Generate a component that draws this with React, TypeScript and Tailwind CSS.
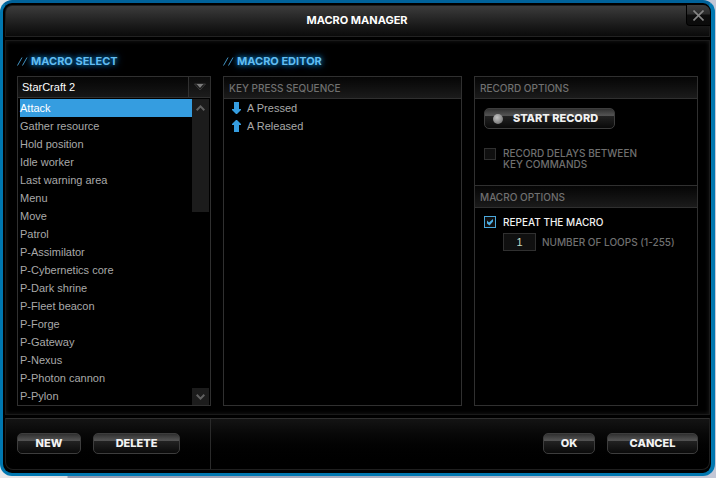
import { useState, type ReactNode } from "react";

const macros = [
  "Attack",
  "Gather resource",
  "Hold position",
  "Idle worker",
  "Last warning area",
  "Menu",
  "Move",
  "Patrol",
  "P-Assimilator",
  "P-Cybernetics core",
  "P-Dark shrine",
  "P-Fleet beacon",
  "P-Forge",
  "P-Gateway",
  "P-Nexus",
  "P-Photon cannon",
  "P-Pylon",
];

const steps = [
  { direction: "down", label: "A Pressed" },
  { direction: "up", label: "A Released" },
];

function Heading({ children }: { children: ReactNode }) {
  return (
    <h2 className="flex h-[18px] items-center gap-[3px] text-[11px] leading-[18px] font-bold text-[#62bdf2] [text-shadow:0_0_5px_#0a7cc4,0_0_9px_#0866a5]">
      <svg className="h-[9px] w-[11px]" viewBox="0 0 11 9" aria-hidden="true">
        <path d="M0.5 8.5 5 0.5M5.5 8.5 10 0.5" stroke="#4293c2" fill="none" />
      </svg>
      {children}
    </h2>
  );
}

function SectionTitle({ children }: { children: ReactNode }) {
  return (
    <h3 className="h-[22px] border-b border-[#303030] bg-linear-to-b from-[#060606] to-[#1b1b1b] px-[5px] text-[10px] leading-[22px] font-medium text-[#707070]">
      {children}
    </h3>
  );
}

function PushButton({ children, className }: { children: ReactNode; className: string }) {
  return (
    <button
      type="button"
      className={
        "flex h-[21px] items-center justify-center rounded-[5px] border border-[#3d3d3d] bg-[linear-gradient(#303030_0%,#545454_34%,#222222_38%,#0a0a0a_100%)] text-[11px] leading-none font-extrabold text-[#f2f2f2] " +
        className
      }
    >
      {children}
    </button>
  );
}

function TickBox({ id, checked, onChange }: { id: string; checked: boolean; onChange: (value: boolean) => void }) {
  return (
    <span className="grid size-[12px] shrink-0">
      <input
        id={id}
        type="checkbox"
        checked={checked}
        onChange={(event) => onChange(event.target.checked)}
        className="peer size-[12px] appearance-none border border-[#303030] bg-[#101010] [grid-area:1/1] checked:border-[#4aa8dc]"
      />
      <svg
        className="pointer-events-none invisible size-[12px] [grid-area:1/1] peer-checked:visible"
        viewBox="0 0 12 12"
        aria-hidden="true"
      >
        <path d="M3 4.5 5 6.5 9 3V5.5L5.5 9.5 3 7.5Z" fill="#4fb2e8" />
      </svg>
    </span>
  );
}

export default function App() {
  const [selected, setSelected] = useState("Attack");
  const [delays, setDelays] = useState(false);
  const [repeat, setRepeat] = useState(true);
  const [loops, setLoops] = useState("1");

  return (
    <div className="bg-[linear-gradient(90deg,#e8e8ea_0,#dcdce0_67px,#8f96ab_68px,#c3c7d6_100%)] pr-px pb-[2px] font-['Inter','Liberation_Sans',sans-serif]">
      <main className="rounded-[12px] border-[3px] border-r-4 border-[#0077b0] border-t-[#00629a] bg-black pt-[2px] pr-px pb-[3px] pl-[2px]">
        <header className="flex h-8 rounded-t-[7px] border border-t-[#1c1c1c] border-r-[#1c1c1c] border-b-[#222] border-l-[#1c1c1c] bg-linear-to-b from-[#3c3c3c] to-[#0a0a0a]">
          <span className="w-[22px] shrink-0" />
          <h1 className="flex-1 text-center text-[11px] leading-[28px] font-bold text-white">MACRO MANAGER</h1>
          <button
            type="button"
            aria-label="Close"
            className="-mt-px -mr-px flex h-[21px] w-[24px] shrink-0 items-center justify-center rounded-tr-[7px] rounded-bl-[4px] border-b border-l border-black bg-[linear-gradient(#3c3c3c_0%,#2c2c2c_45%,#0e0e0e_50%,#0b0b0b_100%)]"
          >
            <svg className="size-[11px]" viewBox="0 0 11 11" aria-hidden="true">
              <path d="M0.5 0.5 10.5 10.5M10.5 0.5 0.5 10.5" stroke="#858585" strokeWidth="1.6" />
            </svg>
          </button>
        </header>

        <div className="mt-[3px] grid grid-cols-[194fr_239fr_224fr] gap-x-3 border border-[#1a1a1a] px-[11px] pt-[11px] pb-2 shadow-[inset_0_0_4px_#1a1a1a]">
          <section className="flex flex-col gap-[6px]">
            <Heading>MACRO SELECT</Heading>
            <div className="h-[330px] border border-[#303030] font-['Liberation_Sans',Arial,sans-serif] text-[11px]">
              <div className="grid h-[21px] border-b border-[#303030] bg-linear-to-b from-[#060606] to-[#161616]">
                <select
                  aria-label="Game profile"
                  className="h-5 w-full appearance-none bg-transparent pl-1 text-white [grid-area:1/1]"
                >
                  <option>StarCraft 2</option>
                </select>
                <span className="pointer-events-none flex h-5 w-[22px] items-center justify-center justify-self-end border-l border-[#303030] bg-linear-to-b from-[#0c0c0c] to-[#1c1c1c] [grid-area:1/1]">
                  <svg className="h-[8px] w-[12px]" viewBox="0 0 12 8" aria-hidden="true">
                    <path d="M0.5 1H11.5L6 7Z" fill="#161616" stroke="#3c3c3c" />
                    <path d="M2.5 1H9.5L6 5Z" fill="#7c7c7c" />
                  </svg>
                </span>
              </div>
              <div className="flex p-px pl-[2px]">
                <ul role="listbox" aria-label="Macros" className="flex-1">
                  {macros.map((name) => (
                    <li
                      key={name}
                      role="option"
                      aria-selected={name === selected}
                      onClick={() => setSelected(name)}
                      className="h-[18px] leading-[18px] text-[#a9a9a9] aria-selected:bg-[#359de0] aria-selected:text-white"
                    >
                      {name}
                    </li>
                  ))}
                </ul>
                <div className="flex w-[17px] flex-col justify-between">
                  <div className="h-[113px] bg-[#1c1c1c]">
                    <button type="button" aria-label="Scroll up" className="flex h-[17px] w-full items-center justify-center">
                      <svg className="h-[6px] w-[9px]" viewBox="0 0 9 6" aria-hidden="true">
                        <path d="M0.7 5.2 4.5 1.4 8.3 5.2" fill="none" stroke="#606060" strokeWidth="2" />
                      </svg>
                    </button>
                  </div>
                  <button type="button" aria-label="Scroll down" className="flex h-[17px] w-full items-center justify-center bg-[#1c1c1c]">
                    <svg className="h-[6px] w-[9px]" viewBox="0 0 9 6" aria-hidden="true">
                      <path d="M0.7 0.8 4.5 4.6 8.3 0.8" fill="none" stroke="#606060" strokeWidth="2" />
                    </svg>
                  </button>
                </div>
              </div>
            </div>
          </section>

          <section className="flex flex-col gap-[6px]">
            <Heading>MACRO EDITOR</Heading>
            <div className="h-[330px] border border-[#303030]">
              <SectionTitle>KEY PRESS SEQUENCE</SectionTitle>
              <ol className="font-['Liberation_Sans',Arial,sans-serif] text-[11px]">
                {steps.map((step) => (
                  <li key={step.label} className="flex h-[18px] items-center gap-[6px] pl-2 leading-[18px] text-[#a9a9a9]">
                    <svg
                      className={"h-[12px] w-[9px] " + (step.direction === "up" ? "rotate-180" : "")}
                      viewBox="0 0 9 12"
                      aria-hidden="true"
                    >
                      <path d="M2 0H7V7H9V8L5 12H4L0 8V7H2Z" fill="#359de0" />
                    </svg>
                    {step.label}
                  </li>
                ))}
              </ol>
            </div>
          </section>

          <section className="flex flex-col pt-6">
            <div className="h-[330px] border border-[#303030] text-[10px] leading-[11px] font-medium text-[#707070]">
              <SectionTitle>RECORD OPTIONS</SectionTitle>
              <div className="px-[9px] pt-[9px] pb-[15px]">
                <PushButton className="w-[131px] gap-[10px] pr-2">
                  <span className="size-[10px] rounded-full bg-[radial-gradient(circle_at_40%_35%,#c4c4c4,#5e5e5e)]" />
                  START RECORD
                </PushButton>
                <div className="mt-[19px] flex gap-[7px]">
                  <TickBox id="delays" checked={delays} onChange={setDelays} />
                  <label htmlFor="delays">
                    RECORD DELAYS BETWEEN
                    <br />
                    KEY COMMANDS
                  </label>
                </div>
              </div>
              <div className="border-t border-[#303030]">
                <SectionTitle>MACRO OPTIONS</SectionTitle>
              </div>
              <div className="px-[9px] pt-2">
                <div className="flex items-center gap-[7px]">
                  <TickBox id="repeat" checked={repeat} onChange={setRepeat} />
                  <label htmlFor="repeat" className="text-[#f2f2f2]">
                    REPEAT THE MACRO
                  </label>
                </div>
                <div className="mt-[5px] flex items-center gap-[6px] pl-[19px]">
                  <input
                    id="loops"
                    value={loops}
                    onChange={(event) => setLoops(event.target.value)}
                    className="h-[18px] w-[33px] shrink-0 border border-[#303030] bg-[#101010] text-center font-['Liberation_Sans',Arial,sans-serif] text-[11px] text-[#c4dcc4]"
                  />
                  <label htmlFor="loops" className="whitespace-nowrap">
                    NUMBER OF LOOPS (1-255)
                  </label>
                </div>
              </div>
            </div>
          </section>
        </div>

        <footer className="mt-[3px] flex h-[52px] rounded-b-[8px] border border-t-[#303030] border-r-[#1f1f1f] border-b-[#1f1f1f] border-l-[#1f1f1f] bg-linear-to-b from-[#141414] to-black">
          <div className="grid w-full grid-cols-[205fr_498fr]">
            <div className="flex items-start gap-3 border-r border-[#2a2a2a] pt-[14px] pl-[11px]">
              <PushButton className="w-16">NEW</PushButton>
              <PushButton className="w-[87px]">DELETE</PushButton>
            </div>
            <div className="flex items-start justify-end gap-3 pt-[14px] pr-[11px]">
              <PushButton className="w-[52px]">OK</PushButton>
              <PushButton className="w-[91px]">CANCEL</PushButton>
            </div>
          </div>
        </footer>
      </main>
    </div>
  );
}
